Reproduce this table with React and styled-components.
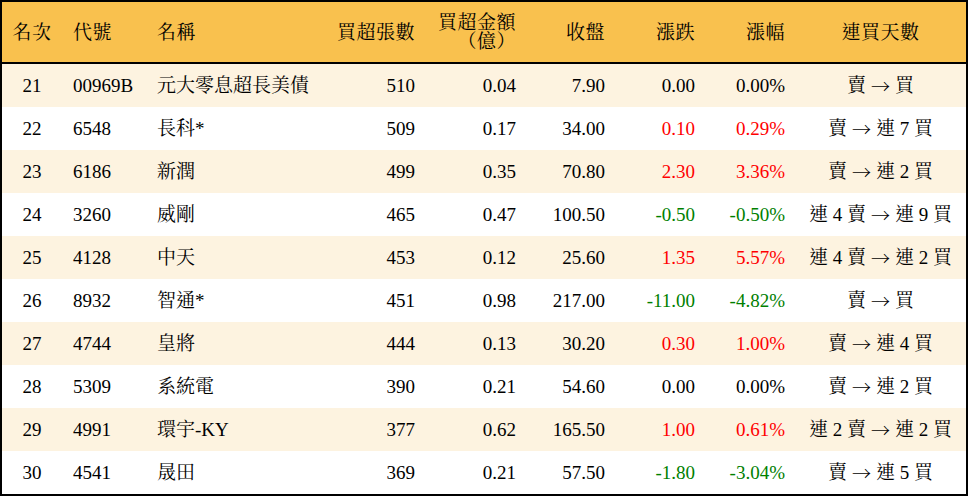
import React from "react";
import styled, { createGlobalStyle } from "styled-components";

const Global = createGlobalStyle`
  html, body { margin: 0; padding: 0; background: #fff; }
  body {
    font-family: "Liberation Serif", "Noto Serif CJK TC", "Noto Sans CJK TC", serif;
    color: #000;
  }
`;

const COLS = "60px 84px 184px 95px 101px 89px 90px 90px 171px";

const Table = styled.div`
  width: 968px;
  box-sizing: border-box;
  border: 2px solid #000;
  font-size: 19px;
`;

const HeaderRow = styled.div`
  display: grid;
  grid-template-columns: ${COLS};
  height: 60px;
  background: #f9c14e;
  border-bottom: 2px solid #000;
`;

const Row = styled.div`
  display: grid;
  grid-template-columns: ${COLS};
  height: 43px;
  background: ${(p) => (p.$alt ? "#fdf3e0" : "#ffffff")};
`;

const Cell = styled.div`
  display: flex;
  align-items: center;
  justify-content: ${(p) =>
    p.$align === "center" ? "center" : p.$align === "right" ? "flex-end" : "flex-start"};
  text-align: ${(p) => p.$align || "left"};
  padding: ${(p) =>
    p.$align === "right" ? "0 10px 0 0" : p.$align === "left" ? "0 0 0 11px" : "0"};
  color: ${(p) => (p.$tone === "up" ? "#ff0000" : p.$tone === "down" ? "#008000" : "#000")};
  white-space: pre;
  line-height: 19px;
`;

const HeadCell = styled(Cell)`
  white-space: pre-line;
  letter-spacing: 0.5px;
`;

const Streak = styled.span`
  display: inline-flex;
  align-items: center;
  gap: 5px;
`;

const Arrow = styled.span`
  font-family: "Noto Serif CJK TC", "Noto Sans CJK TC", serif;
  display: inline-block;
`;

const cols = [
  { label: "名次", align: "center" },
  { label: "代號", align: "left" },
  { label: "名稱", align: "left" },
  { label: "買超張數", align: "right" },
  { label: "買超金額\n（億）", align: "right" },
  { label: "收盤", align: "right" },
  { label: "漲跌", align: "right" },
  { label: "漲幅", align: "right" },
  { label: "連買天數", align: "center" },
];

const data = [
  ["21", "00969B", "元大零息超長美債", "510", "0.04", "7.90", "0.00", "0.00%", "賣 → 買"],
  ["22", "6548", "長科*", "509", "0.17", "34.00", "0.10", "0.29%", "賣 → 連 7 買"],
  ["23", "6186", "新潤", "499", "0.35", "70.80", "2.30", "3.36%", "賣 → 連 2 買"],
  ["24", "3260", "威剛", "465", "0.47", "100.50", "-0.50", "-0.50%", "連 4 賣 → 連 9 買"],
  ["25", "4128", "中天", "453", "0.12", "25.60", "1.35", "5.57%", "連 4 賣 → 連 2 買"],
  ["26", "8932", "智通*", "451", "0.98", "217.00", "-11.00", "-4.82%", "賣 → 買"],
  ["27", "4744", "皇將", "444", "0.13", "30.20", "0.30", "1.00%", "賣 → 連 4 買"],
  ["28", "5309", "系統電", "390", "0.21", "54.60", "0.00", "0.00%", "賣 → 連 2 買"],
  ["29", "4991", "環宇-KY", "377", "0.62", "165.50", "1.00", "0.61%", "連 2 賣 → 連 2 買"],
  ["30", "4541", "晟田", "369", "0.21", "57.50", "-1.80", "-3.04%", "賣 → 連 5 買"],
];

const toneOf = (v) => {
  const n = parseFloat(v);
  if (n > 0) return "up";
  if (n < 0) return "down";
  return undefined;
};

const renderStreak = (s) => {
  const [a, b] = s.split(" → ");
  return (
    <Streak>
      <span>{a}</span>
      <Arrow>→</Arrow>
      <span>{b}</span>
    </Streak>
  );
};

export default function App() {
  return (
    <>
      <Global />
      <Table>
        <HeaderRow>
          {cols.map((c) => (
            <HeadCell key={c.label} $align={c.align}>
              {c.label}
            </HeadCell>
          ))}
        </HeaderRow>
        {data.map((r, i) => (
          <Row key={r[0]} $alt={i % 2 === 0}>
            {r.map((v, j) => (
              <Cell
                key={j}
                $align={cols[j].align}
                $tone={j === 6 || j === 7 ? toneOf(v) : undefined}
              >
                {j === 8 ? renderStreak(v) : v}
              </Cell>
            ))}
          </Row>
        ))}
      </Table>
    </>
  );
}
